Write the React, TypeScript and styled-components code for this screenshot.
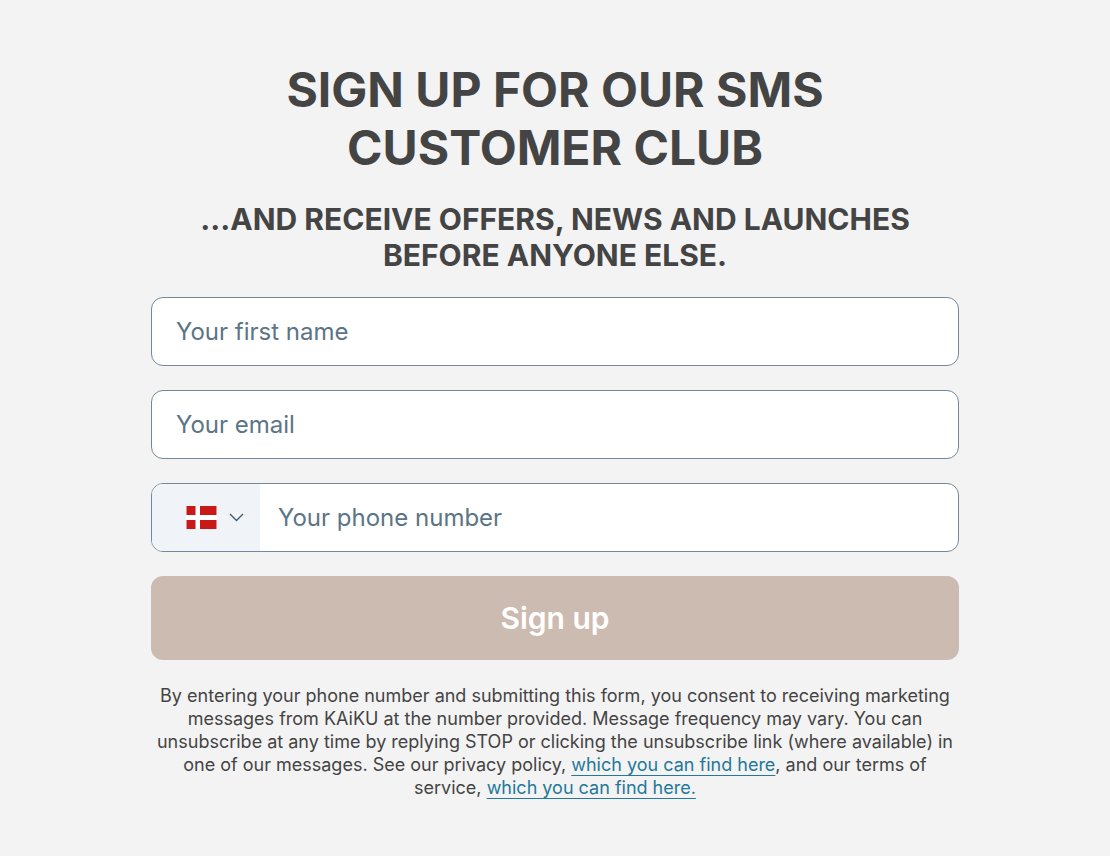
import React from "react";
import styled, { createGlobalStyle } from "styled-components";

const GlobalStyle = createGlobalStyle`
  *, *::before, *::after { box-sizing: border-box; }
  body {
    margin: 0;
    background: #ffffff;
    color: #444444;
    font-family: Inter, "Liberation Sans", sans-serif;
  }
`;

const Page = styled.main`
  display: flex;
  justify-content: center;
  padding: 61px 24px 57px;
  background: #f3f3f3;
`;

const SignupForm = styled.form`
  display: flex;
  flex-direction: column;
  gap: 24px;
  width: 100%;
  max-width: 808px;
`;

const Title = styled.h1`
  margin: 0 auto;
  max-width: 640px;
  font-size: 48px;
  line-height: 58px;
  font-weight: 700;
  text-align: center;
  text-transform: uppercase;
`;

const Subtitle = styled.h2`
  margin: 0 auto;
  max-width: 740px;
  font-size: 30px;
  line-height: 36px;
  font-weight: 700;
  text-align: center;
  text-transform: uppercase;
`;

const Field = styled.div`
  display: flex;
  height: 69px;
  overflow: hidden;
  border: 1px solid #73899a;
  border-radius: 12px;
  background: #ffffff;

  &:focus-within { border-color: #24789a; }
`;

const TextInput = styled.input<{ $inset?: number }>`
  flex: 1;
  min-width: 0;
  padding: 0 24px 0 ${({ $inset = 24 }) => $inset}px;
  border: 0;
  outline: 0;
  background: transparent;
  color: #444444;
  font-family: inherit;
  font-size: 24px;

  &::placeholder {
    color: #5b7486;
    opacity: 1;
  }
`;

const CountryPicker = styled.div`
  position: relative;
  display: flex;
  align-items: center;
  justify-content: flex-end;
  gap: 12px;
  width: 108px;
  padding-right: 16px;
  background: #f0f4f8;
`;

const CountrySelect = styled.select`
  position: absolute;
  inset: 0;
  width: 100%;
  border: 0;
  outline: 0;
  appearance: none;
  background: transparent;
  color: transparent;
  font-size: 16px;
  cursor: pointer;

  option { color: #444444; }
`;

const SubmitButton = styled.button`
  height: 84px;
  border: 0;
  border-radius: 12px;
  background: #ccbbb0;
  color: #ffffff;
  font-family: inherit;
  font-size: 30px;
  font-weight: 600;
  cursor: pointer;
`;

const Consent = styled.p`
  margin: 0;
  font-size: 18px;
  line-height: 23px;
  text-align: center;
`;

const ConsentLink = styled.a`
  color: #24789a;
  text-decoration: underline;
  text-decoration-thickness: 1px;
  text-underline-offset: 4px;
`;

const DanishFlag = () => (
  <svg width="31" height="23" viewBox="0 0 31 23" aria-hidden="true">
    <path fill="#ffffff" d="M0 0h31v23H0z" />
    <path fill="#c81818" d="M.5 0H9.5v9H.5zM14 0h16.5v9H14zM.5 14H9.5v9H.5zM14 14h16.5v9H14z" />
  </svg>
);

const Chevron = () => (
  <svg width="15" height="9" viewBox="0 0 15 9" fill="none" aria-hidden="true">
    <path d="M1 1l6.5 6.5L14 1" stroke="#425b6c" strokeWidth="1.4" />
  </svg>
);

export default function App() {
  return (
    <>
      <GlobalStyle />
      <Page>
        <SignupForm onSubmit={(event) => event.preventDefault()}>
          <Title>Sign up for our SMS customer club</Title>
          <Subtitle>...and receive offers, news and launches before anyone else.</Subtitle>
          <Field>
            <TextInput type="text" placeholder="Your first name" aria-label="Your first name" />
          </Field>
          <Field>
            <TextInput type="email" placeholder="Your email" aria-label="Your email" />
          </Field>
          <Field>
            <CountryPicker>
              <DanishFlag />
              <Chevron />
              <CountrySelect aria-label="Country" defaultValue="">
                <option value="" />
              </CountrySelect>
            </CountryPicker>
            <TextInput $inset={18} type="tel" placeholder="Your phone number" aria-label="Your phone number" />
          </Field>
          <SubmitButton type="submit">Sign up</SubmitButton>
          <Consent>
            By entering your phone number and submitting this form, you consent to receiving marketing
            messages from KAiKU at the number provided. Message frequency may vary. You can unsubscribe
            at any time by replying STOP or clicking the unsubscribe link (where available) in one of our
            messages. See our privacy policy, <ConsentLink href="#privacy">which you can find here</ConsentLink>,
            and our terms of service, <ConsentLink href="#terms">which you can find here.</ConsentLink>
          </Consent>
        </SignupForm>
      </Page>
    </>
  );
}
